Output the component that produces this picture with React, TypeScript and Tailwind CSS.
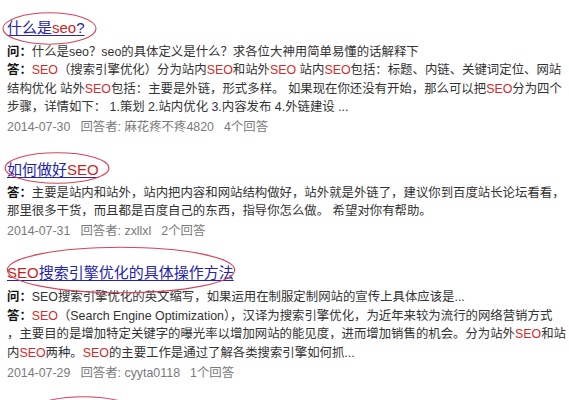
import React from "react";

const R = ({ children }: { children: React.ReactNode }) => (
  <span className="text-[#d42a2a]">{children}</span>
);

const Label = ({ children }: { children: React.ReactNode }) => (
  <span className="font-bold text-[#111]">{children}</span>
);

function Title({ children }: { children: React.ReactNode }) {
  return (
    <div className="h-[22px] leading-[22px] text-[15px] text-[#2424b0] underline underline-offset-[2px] whitespace-nowrap">
      {children}
    </div>
  );
}

function Meta({ date, user, count }: { date: string; user: string; count: string }) {
  return (
    <div className="mt-[1.5px] flex gap-[10px] whitespace-nowrap text-[#7a7a7a]">
      <span>{date}</span>
      <span>回答者: {user}</span>
      <span>{count}</span>
    </div>
  );
}

function Ring({ className }: { className: string }) {
  return (
    <svg className={"absolute pointer-events-none " + className} viewBox="0 0 100 40" preserveAspectRatio="none">
      <ellipse cx="50" cy="20" rx="49" ry="19" fill="none" stroke="#d2455a" strokeWidth="1.1" vectorEffect="non-scaling-stroke" />
    </svg>
  );
}

export default function App() {
  return (
    <div
      className="relative w-[569px] h-[400px] overflow-hidden bg-white px-[7px] pt-[17px] text-[12.4px] leading-[18.5px] text-[#333]"
      style={{ fontFamily: '"Liberation Sans", Arial, "Noto Sans CJK SC", sans-serif' }}
    >
      <Ring className="left-[2px] top-[12px] w-[95px] h-[33px]" />
      <Ring className="left-[4px] top-[152px] w-[106px] h-[32px]" />
      <Ring className="left-[5px] top-[246px] w-[232px] h-[48px]" />
      <Ring className="left-[31px] top-[396px] w-[105px] h-[30px]" />

      {/* item 1 */}
      <section>
        <Title>
          什么是<span className="text-[#cc1f1f]">seo</span>?
        </Title>
        <div className="mt-[3.5px] whitespace-nowrap">
          <div><Label>问：</Label>什么是seo？seo的具体定义是什么？求各位大神用简单易懂的话解释下</div>
          <div><Label>答：</Label><R>SEO</R>（搜索引擎优化）分为站内<R>SEO</R>和站外<R>SEO</R> 站内<R>SEO</R>包括：标题、内链、关键词定位、网站</div>
          <div>结构优化 站外<R>SEO</R>包括：主要是外链，形式多样。 如果现在你还没有开始，那么可以把<R>SEO</R>分为四个</div>
          <div>步骤，详情如下： 1.策划 2.站内优化 3.内容发布 4.外链建设 ...</div>
        </div>
        <Meta date="2014-07-30" user="麻花疼不疼4820" count="4个回答" />
      </section>

      {/* item 2 */}
      <section className="mt-[22px]">
        <Title>
          如何做好<span className="text-[#cc1f1f]">SEO</span>
        </Title>
        <div className="mt-[3px] whitespace-nowrap">
          <div><Label>答：</Label>主要是站内和站外，站内把内容和网站结构做好，站外就是外链了，建议你到百度站长论坛看看，</div>
          <div>那里很多干货，而且都是百度自己的东西，指导你怎么做。 希望对你有帮助。</div>
        </div>
        <Meta date="2014-07-31" user="zxllxl" count="2个回答" />
      </section>

      {/* item 3 */}
      <section className="mt-[21px]">
        <Title>
          <span className="text-[#cc1f1f]">SEO</span>搜索引擎优化的具体操作方法
        </Title>
        <div className="mt-[4.5px] whitespace-nowrap">
          <div><Label>问：</Label>SEO搜索引擎优化的英文缩写，如果运用在制服定制网站的宣传上具体应该是...</div>
          <div><Label>答：</Label><R>SEO</R>（Search Engine Optimization），汉译为搜索引擎优化，为近年来较为流行的网络营销方式</div>
          <div>，主要目的是增加特定关键字的曝光率以增加网站的能见度，进而增加销售的机会。分为站外<R>SEO</R>和站</div>
          <div>内<R>SEO</R>两种。<R>SEO</R>的主要工作是通过了解各类搜索引擎如何抓...</div>
        </div>
        <Meta date="2014-07-29" user="cyyta0118" count="1个回答" />
      </section>
    </div>
  );
}
